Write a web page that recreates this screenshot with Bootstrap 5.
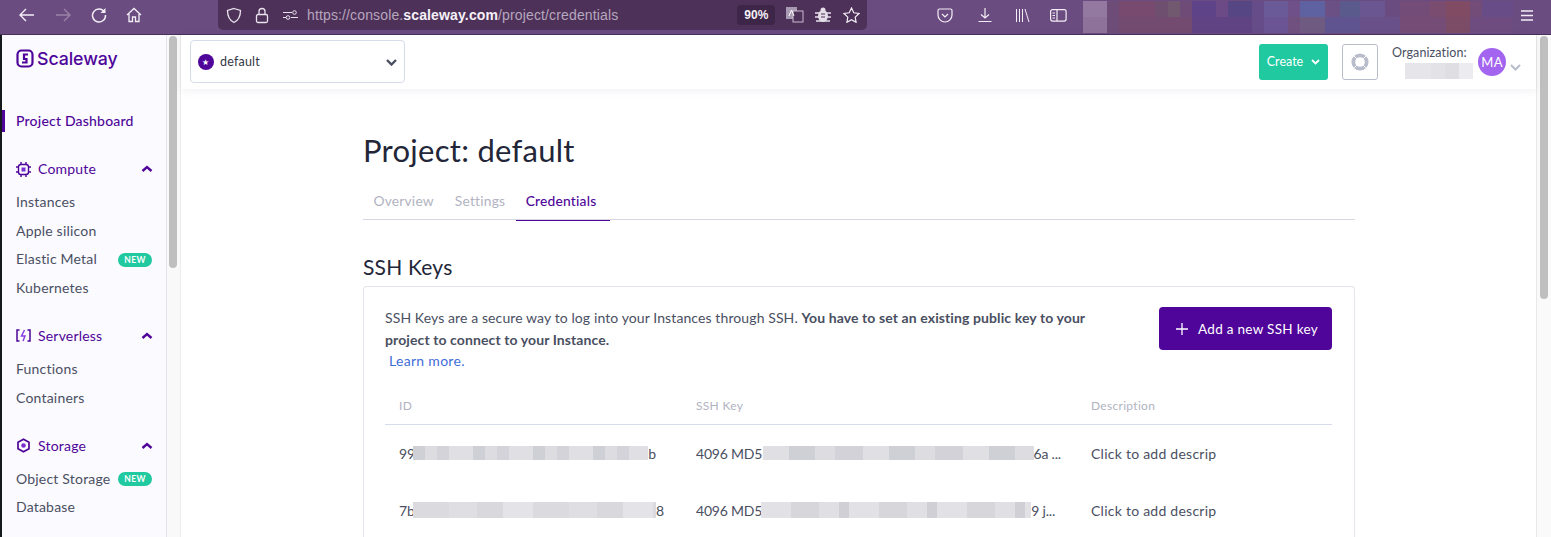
<!DOCTYPE html>
<html lang="en">
<head>
  <meta charset="UTF-8" />
  <title>Scaleway - Credentials</title>
  <meta name="viewport" content="width=device-width, initial-scale=1" />
  <link href="https://cdn.jsdelivr.net/npm/bootstrap@5.3.0/dist/css/bootstrap.min.css" rel="stylesheet" />
  <style>
    html, body { height: 537px; overflow: hidden; }
    body { background: #fff; font-family: Lato, "Liberation Sans", sans-serif; font-size: 14px; color: #4a4f62; letter-spacing: .2px; }
    .browser-bar { height: 35px; background: #6b4c80; border-bottom: 1px solid #4a2f5c; color: #f3eef6; flex: none; }
    .tool-left { width: 218px; flex: none; padding: 0 0 4px 18px; }
    .tool-left svg { display: block; flex: none; }
    .url-bar { width: 649px; flex: none; height: 30px; background: #4e3159; border-radius: 0 0 5px 5px; padding: 0 7px; font-family: "Liberation Sans", sans-serif; font-size: 14px; letter-spacing: .135px; color: #b5a7bd; }
    .url-bar svg { flex: none; }
    .url-bar b { color: #f5f1f7; font-weight: 700; }
    .url-text { margin-left: 9px; white-space: nowrap; }
    .zoom-pill { background: #3d2647; color: #f4f0f6; font-size: 12px; font-weight: 700; border-radius: 4px; width: 38px; height: 20px; letter-spacing: 0; margin-left: 119px; flex: none; }
    .right-tools { padding-bottom: 4px; min-width: 0; }
    .right-tools svg { flex: none; }
    .pixel-strip { width: 430px; height: 32px; flex: none; margin: 4px 0 0 16px; background:
      linear-gradient(90deg, #9378a0 0 24px, #6e4c78 24px 36px, #784a70 36px 72px, #6f4f70 72px 85px, #715a70 85px 97px, #6f4c78 97px 109px, #5f4388 109px 133px, #6b4a86 133px 145px, #564684 145px 169px, #664c88 169px 181px, #6a5a98 181px 205px, #6f5088 205px 217px, #5f62a0 217px 242px, #6a5084 242px 257px, #5b5a8c 257px 277px, #6a5690 277px 302px, #6b4c80 302px 317px, #744c78 317px 347px, #7a4c70 347px 363px, #814b64 363px 387px, #744c78 387px 399px, #684c88 399px 430px) 0 0 / 100% 16px no-repeat,
      linear-gradient(90deg, #8e7299 0 24px, #6e4c78 24px 36px, #734a70 36px 109px, #5f4382 109px 169px, #664c88 169px 181px, #6a5494 181px 205px, #70507f 205px 217px, #6f5a82 217px 242px, #5f5490 242px 277px, #6a5088 277px 317px, #744c76 317px 363px, #7c4c66 363px 387px, #6f4c80 387px 430px) 0 16px / 100% 16px no-repeat; }
    .edge-strip { width: 2px; background: #15181d; flex: none; }
    .side-nav { width: 165px; background: #fafaff; border-right: 1px solid #e4e4ec; flex: none; height: 502px; overflow: hidden; }
    .side-scroll { width: 14px; background: #f9f9f9; border-right: 1px solid #ececec; flex: none; padding: 1px 2px 0 2px; }
    .side-scroll span { display: block; width: 8px; height: 232px; background: #bfbfbf; border-radius: 4px; }
    .logo-row { height: 50px; padding: 13px 0 0 14px; gap: 3px; color: #4f0599; font-family: Inter, Lato, sans-serif; font-size: 17.8px; font-weight: 500; letter-spacing: -.1px; line-height: 22px; }
    .dash-item { margin-top: 25px; height: 22px; border-left: 3px solid #4f0599; padding-left: 11px; color: #4f0599; font-weight: 500; font-size: 14px; line-height: 22px; letter-spacing: .2px; }
    .side-group { margin-top: 22.2px; }
    .side-group.first-group { margin-top: 26px; }
    .group-head { height: 22px; padding: 0 13px 0 14px; color: #4f0599; font-size: 14px; line-height: 22px; }
    .group-head svg.glyph { margin-right: 7px; flex: none; }
    .side-link { height: 28.7px; line-height: 28.7px; padding: 0 13px 0 14px; font-size: 14px; color: #4a4f62; white-space: nowrap; }
    .group-links { margin-top: 8px; }
    .new-tag { background: #20c9a0; color: #fff; font-size: 8.5px; font-weight: 700; width: 34px; height: 14px; border-radius: 7px; line-height: 14px; text-align: center; letter-spacing: .3px; margin-right: 1px; }
    .main-area { flex: 1 1 auto; min-width: 0; }
    .top-head { height: 54px; box-shadow: 0 2px 8px rgba(60, 60, 110, .07); padding: 5px 0 0 9px; position: relative; }
    .project-select { width: 215px; height: 43px; border: 1px solid #d6dbea; border-radius: 4px; padding: 1px 7px 0 7px; font-size: 12.5px; color: #343846; }
    .project-dot { width: 16px; height: 16px; border-radius: 50%; background: #4f0599; color: #fff; font-size: 8px; line-height: 16px; text-align: center; margin-right: 6px; }
    .btn-create { width: 69px; height: 36px; background: #20c9a0; border: 0; border-radius: 3px; color: #fff; font-size: 12.5px; padding: 0; margin-top: 4px; }
    .btn-create:hover { background: #20c9a0; color: #fff; }
    .btn-help { width: 36px; height: 36px; border: 1px solid #b9bccb; border-radius: 3px; margin: 4px 0 0 14px; background: #fff; padding: 0; }
    .org-box { width: 91px; margin-left: 14px; font-size: 12.5px; color: #4a4f62; line-height: 14px; padding-top: 6px; text-align: left; white-space: nowrap; letter-spacing: .1px; }
    .org-blur { display: block; width: 68px; height: 16px; margin: 3px 0 0 13px; background: linear-gradient(90deg, #e6e6ea 0 26px, #e3e3e7 26px 40px, #dedee3 40px 54px, #ececf0 54px 68px); }
    .org-avatar { width: 28px; height: 28px; border-radius: 50%; background: #a365f0; color: #fff; font-size: 13px; line-height: 28px; text-align: center; margin-top: 8px; margin-left: -5px; flex: none; }
    .org-caret { margin: 24px 15px 0 4px; flex: none; }
    .content-area { padding: 43px 0 0 182px; width: 1174px; }
    .page-title { font-size: 31px; line-height: 36px; font-weight: 400; color: #222638; margin: 0; letter-spacing: .27px; }
    .tab-row { margin-top: 16px; height: 36px; border-bottom: 1px solid #d6d7e0; flex-wrap: nowrap; }
    .tab-item { padding: 0 10.5px; height: 36px; line-height: 34px; font-size: 13.8px; color: #b1b3c1; letter-spacing: .2px; }
    .tab-item.on { color: #4f0599; font-weight: 500; border-bottom: 1px solid #4f0599; padding: 0 10px; height: 37px; width: 94px; white-space: nowrap; }
    .section-title { font-size: 21px; line-height: 26px; margin: 34px 0 6px; font-weight: 400; color: #222638; letter-spacing: .2px; }
    .key-panel { height: 400px; border: 1px solid #e4e5ec; border-radius: 4px; border-bottom: 0; padding: 20px 22px 0 21px; }
    .intro-text { width: 735px; line-height: 21.5px; font-size: 14px; margin: 0; color: #4a4f62; letter-spacing: .1px; }
    .intro-text a { color: #3f6ed8; text-decoration: none; margin-left: 4px; letter-spacing: .3px; }
    .btn-add { width: 173px; height: 43px; background: #4f0599; border: 0; border-radius: 4px; color: #fff; font-size: 13.5px; padding: 1px 0 0 3px; letter-spacing: .3px; gap: 10px; }
    .btn-add:hover { background: #4f0599; color: #fff; }
    .key-table { table-layout: fixed; width: 947px; margin: 16px 0 0; --bs-table-bg: transparent; }
    .key-table th { height: 37px; padding: 0 0 0 14px; color: #b1b3c1; font-size: 12px; font-weight: 400; border-bottom: 1px solid #d6dbea; vertical-align: middle; letter-spacing: .3px; }
    .key-table td { height: 57px; padding: 0 0 0 14px; border: 0; vertical-align: middle; color: #4a4f62; font-size: 14px; white-space: nowrap; overflow: hidden; }
    .blur-row { display: flex; align-items: center; letter-spacing: -.2px; }
    .blur-bar { display: block; height: 14px; flex: none; margin-left: -1.5px; }
    .blur-a { width: 235px; background: repeating-linear-gradient(90deg, #cfcfd6 0 12px, #dcdce1 12px 24px, #d3d3d9 24px 36px, #e0e0e4 36px 60px); }
    .blur-b { width: 243px; height: 16px; background: repeating-linear-gradient(90deg, #dbdbdf 0 36px, #dfdfe3 36px 64px, #d8d8dd 64px 90px, #e4e4e8 90px 120px); }
    .blur-c { width: 271px; margin-left: -3px; background: repeating-linear-gradient(90deg, #e0e0e4 0 26px, #cfcfd6 26px 52px, #dcdce1 52px 72px, #d2d2d8 72px 100px); }
    .blur-d { width: 270px; margin-left: -1px; height: 16px; background: repeating-linear-gradient(90deg, #e2e2e6 0 30px, #d6d6db 30px 58px, #e0e0e4 58px 78px, #cfcfd5 78px 88px); }
    .cut-text { display: block; width: 125px; overflow: hidden; letter-spacing: .25px; }
    .page-scroll { width: 15px; background: #fafafa; border-left: 1px solid #e8e8e8; flex: none; padding: 1px 3px 0 3px; }
    .page-scroll span { display: block; width: 8px; height: 263px; background: #bfbfbf; border-radius: 4px; }
  </style>
</head>
<body>
  <div class="browser-bar d-flex">
    <div class="tool-left d-flex align-items-center">
      <svg width="18" height="16" viewBox="0 0 18 16" fill="none" stroke="#f3eef6" stroke-width="1.4"><path d="M16 8H2M8 2 2 8l6 6"/></svg>
      <svg width="18" height="16" viewBox="0 0 18 16" fill="none" stroke="#9a82a8" stroke-width="1.4" style="margin-left:18px"><path d="M2 8h14M10 2l6 6-6 6"/></svg>
      <svg width="18" height="18" viewBox="0 0 18 18" fill="none" stroke="#f3eef6" stroke-width="1.5" style="margin-left:18px"><path d="M14.5 6A6.5 6.5 0 1 0 15.5 9"/><path d="M15.5 2v5h-5" fill="#f3eef6" stroke="none"/></svg>
      <svg width="16" height="16" viewBox="0 0 16 16" fill="none" stroke="#f3eef6" stroke-width="1.3" style="margin-left:18px"><path d="M1 8 8 1.500l7 6.500M3 7v7.500h3.500V10h3v4.500H13V7"/></svg>
    </div>
    <div class="url-bar d-flex align-items-center">
      <svg width="16" height="17" viewBox="0 0 16 17" fill="none" stroke="#e9e3ed" stroke-width="1.3" style="margin-left:1px"><path d="M8 1.500 14.500 3.500c0 6-1.500 9.500-6.500 12C3 13 1.500 9.500 1.500 3.500z"/></svg>
      <svg width="14" height="17" viewBox="0 0 14 17" fill="none" stroke="#e9e3ed" stroke-width="1.3" style="margin-left:13px"><rect x="1.500" y="7.500" width="11" height="8" rx="1.500"/><path d="M4 7.500V4.500a3 3 0 0 1 6 0v3"/></svg>
      <svg width="15" height="10" viewBox="0 0 15 10" fill="none" stroke="#e9e3ed" stroke-width="1" style="margin-left:14px"><path d="M0 2.500h9M0 7.500h3"/><circle cx="11.500" cy="2.500" r="1.800"/><circle cx="5" cy="7.500" r="1.800"/><path d="M8 7.500h7"/></svg>
      <span class="url-text">https://console.<b>scaleway.com</b>/project/credentials</span>
      <span class="zoom-pill d-flex align-items-center justify-content-center">90%</span>
      <svg width="18" height="16" viewBox="0 0 18 16" style="margin-left:11px"><rect x="0" y="0" width="11" height="12" fill="#a99ab3"/><rect x="7" y="4" width="10" height="11" fill="#4e3159" stroke="#c7bbcf"/><path d="M3 9 5.500 3 8 9" fill="none" stroke="#fff"/></svg>
      <svg width="16" height="16" viewBox="0 0 16 16" style="margin-left:11px"><ellipse cx="8" cy="9" rx="5" ry="6" fill="#e4dee8"/><circle cx="8" cy="3" r="2.500" fill="#e4dee8"/><path d="M0 6h16M0 10h16M1 14h14" stroke="#e4dee8" stroke-width="1.300"/><path d="M6 7h4M6 10h4" stroke="#4e3159"/></svg>
      <svg width="17" height="16" viewBox="0 0 17 16" fill="none" stroke="#f3eef6" stroke-width="1.2" style="margin-left:12px"><path d="M8.500 1l2.300 4.800 5.200.7-3.800 3.600.9 5.200-4.600-2.500-4.600 2.500.9-5.200L1 6.500l5.200-.7z"/></svg>
    </div>
    <div class="right-tools d-flex align-items-center flex-grow-1">
      <svg width="16" height="15" viewBox="0 0 16 15" fill="none" stroke="#f3eef6" stroke-width="1.2" style="margin-left:70px"><path d="M1 2.500c0-1 .5-1.500 1.500-1.500h11c1 0 1.500.5 1.500 1.500V7a7 7 0 0 1-14 0z"/><path d="M5 6l3 3 3-3"/></svg>
      <svg width="16" height="16" viewBox="0 0 16 16" fill="none" stroke="#f3eef6" stroke-width="1.2" style="margin-left:24px"><path d="M8 1v10M4 7.500 8 11l4-3.500M1.500 14.500h13"/></svg>
      <svg width="15" height="15" viewBox="0 0 15 15" fill="none" stroke="#f3eef6" stroke-width="1" style="margin-left:22px"><path d="M1.500 1v13M4.500 1v13M7.500 1v13M10 1l4 13"/></svg>
      <svg width="17" height="13" viewBox="0 0 17 13" fill="none" stroke="#f3eef6" stroke-width="1.200" style="margin-left:20px"><rect x=".6" y=".6" width="15.500" height="11.500" rx="2"/><path d="M7 1v11M2.500 4h2.500M2.500 6.500h2.500M2.500 9h2.500"/></svg>
      <div class="pixel-strip"></div>
      <svg width="14" height="11" viewBox="0 0 14 11" stroke="#f3eef6" stroke-width="1.400" style="margin-left:7px"><path d="M1 1h12M1 5.500h12M1 10h12"/></svg>
    </div>
  </div>

  <div class="d-flex">
    <div class="edge-strip"></div>
    <nav class="side-nav">
      <div class="logo-row d-flex align-items-start">
        <svg width="18" height="19" viewBox="0 0 18 19" fill="none" stroke="#4f0599" stroke-width="2.200" style="margin-top:1px"><rect x="1.500" y="1.500" width="15" height="16" rx="4"/><path d="M12 5.500H8v4.500h2.500v3.500H6"/></svg>
        <span>Scaleway</span>
      </div>
      <div class="dash-item">Project Dashboard</div>

      <div class="side-group first-group">
        <div class="group-head d-flex align-items-center">
          <svg class="glyph" width="15" height="15" viewBox="0 0 15 15" fill="none" stroke="#4f0599" stroke-width="1.400"><rect x="2.500" y="2.500" width="10" height="10" rx="2.500"/><rect x="5.500" y="5.500" width="4" height="4" fill="#7a2fd0" stroke="none"/><path d="M5 0v2M10 0v2M5 13v2M10 13v2M0 5h2M0 10h2M13 5h2M13 10h2"/></svg>
          <span class="flex-grow-1">Compute</span>
          <svg width="12" height="8" viewBox="0 0 12 8" fill="none" stroke="#4f0599" stroke-width="2.400"><path d="M1.500 6 6 2l4.500 4"/></svg>
        </div>
        <div class="group-links">
          <div class="side-link">Instances</div>
          <div class="side-link">Apple silicon</div>
          <div class="side-link d-flex align-items-center justify-content-between"><span>Elastic Metal</span><span class="new-tag">NEW</span></div>
          <div class="side-link">Kubernetes</div>
        </div>
      </div>

      <div class="side-group">
        <div class="group-head d-flex align-items-center">
          <svg class="glyph" width="15" height="13" viewBox="0 0 15 13" fill="none" stroke="#4f0599" stroke-width="1.500"><path d="M3.500 1H1v11h2.500M11.500 1H14v11h-2.500"/><path d="M8.500 1 5.500 7h3.500l-2 5" stroke="#8a3fe0"/></svg>
          <span class="flex-grow-1">Serverless</span>
          <svg width="12" height="8" viewBox="0 0 12 8" fill="none" stroke="#4f0599" stroke-width="2.400"><path d="M1.500 6 6 2l4.500 4"/></svg>
        </div>
        <div class="group-links">
          <div class="side-link">Functions</div>
          <div class="side-link">Containers</div>
        </div>
      </div>

      <div class="side-group">
        <div class="group-head d-flex align-items-center">
          <svg class="glyph" width="15" height="15" viewBox="0 0 15 15" fill="none" stroke="#4f0599" stroke-width="1.700"><path d="M7.500 1.200 13 4.300v6.400l-5.500 3.100L2 10.700V4.300z"/><circle cx="7.500" cy="7.500" r="2.300" fill="#7a2fd0" stroke="none"/></svg>
          <span class="flex-grow-1">Storage</span>
          <svg width="12" height="8" viewBox="0 0 12 8" fill="none" stroke="#4f0599" stroke-width="2.400"><path d="M1.500 6 6 2l4.500 4"/></svg>
        </div>
        <div class="group-links">
          <div class="side-link d-flex align-items-center justify-content-between"><span>Object Storage</span><span class="new-tag">NEW</span></div>
          <div class="side-link">Database</div>
        </div>
      </div>
    </nav>
    <div class="side-scroll"><span></span></div>

    <main class="main-area">
      <header class="top-head d-flex">
        <div class="project-select d-flex align-items-center">
          <span class="project-dot">★</span>
          <span class="flex-grow-1">default</span>
          <svg width="11" height="7" viewBox="0 0 11 7" fill="none" stroke="#4a4f62" stroke-width="2.400"><path d="M1 1l4.500 4.500L10 1"/></svg>
        </div>
        <div class="ms-auto d-flex align-items-start">
          <button class="btn btn-create d-flex align-items-center justify-content-center gap-2" type="button">Create
            <svg width="9" height="6" viewBox="0 0 9 6" fill="none" stroke="#fff" stroke-width="1.800"><path d="M1 1l3.500 3.500L8 1"/></svg>
          </button>
          <button class="btn btn-help d-flex align-items-center justify-content-center" type="button" aria-label="Support">
            <svg width="18" height="18" viewBox="0 0 18 18" fill="none"><circle cx="9" cy="9" r="6.700" stroke="#b9bccb" stroke-width="3.800"/><path d="M3 3l3 3M15 3l-3 3M3 15l3-3M15 15l-3-3" stroke="#fff" stroke-width=".9"/></svg>
          </button>
          <div class="org-box">Organization:<span class="org-blur"></span></div>
          <div class="org-avatar">MA</div>
          <svg class="org-caret" width="11" height="7" viewBox="0 0 11 7" fill="none" stroke="#b9bccb" stroke-width="2"><path d="M1 1l4.500 4.500L10 1"/></svg>
        </div>
      </header>

      <section class="content-area">
        <h1 class="page-title">Project: default</h1>
        <div class="tab-row d-flex">
          <div class="tab-item">Overview</div>
          <div class="tab-item">Settings</div>
          <div class="tab-item on">Credentials</div>
        </div>
        <h2 class="section-title">SSH Keys</h2>
        <div class="key-panel">
          <div class="d-flex justify-content-between align-items-start">
            <p class="intro-text">SSH Keys are a secure way to log into your Instances through SSH. <strong>You have to set an existing public key to your project to connect to your Instance.</strong><br><a href="#">Learn more.</a></p>
            <button class="btn btn-add d-flex align-items-center justify-content-center" type="button">
              <svg width="12" height="12" viewBox="0 0 12 12" stroke="#fff" stroke-width="1.300"><path d="M6 0v12M0 6h12"/></svg>
              <span>Add a new SSH key</span>
            </button>
          </div>
          <table class="table key-table">
            <colgroup><col style="width:297px"><col style="width:395px"><col></colgroup>
            <thead>
              <tr><th>ID</th><th>SSH Key</th><th>Description</th></tr>
            </thead>
            <tbody>
              <tr>
                <td><span class="blur-row">99<span class="blur-bar blur-a"></span>b</span></td>
                <td><span class="blur-row">4096 MD5:<span class="blur-bar blur-c"></span>6a ...</span></td>
                <td><span class="cut-text">Click to add descrip</span></td>
              </tr>
              <tr>
                <td><span class="blur-row">7b<span class="blur-bar blur-b"></span>8</span></td>
                <td><span class="blur-row">4096 MD5<span class="blur-bar blur-d"></span>9 j...</span></td>
                <td><span class="cut-text">Click to add descrip</span></td>
              </tr>
            </tbody>
          </table>
        </div>
      </section>
    </main>
    <div class="page-scroll"><span></span></div>
  </div>
  <script src="https://cdn.jsdelivr.net/npm/bootstrap@5.3.0/dist/js/bootstrap.bundle.min.js"></script>
</body>
</html>
